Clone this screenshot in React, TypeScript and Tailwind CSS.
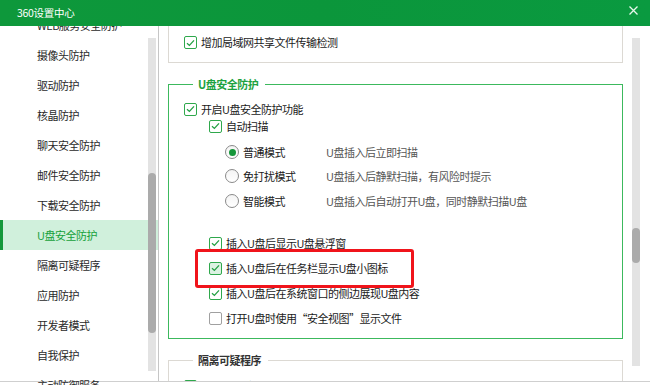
import React from "react";

const FONT = { fontFamily: '"Noto Sans CJK SC", "Noto Sans", sans-serif' };

function Check({ checked = true, hl = false }: { checked?: boolean; hl?: boolean }) {
  return (
    <div
      className={
        "w-[13px] h-[13px] shrink-0 rounded-[2px] border flex items-center justify-center " +
        (checked
          ? hl
            ? "border-[#2fa84c] bg-[#dcf2e2]"
            : "border-[#2fa84c] bg-white"
          : "border-[#a0a0a0] bg-white")
      }
    >
      {checked && (
        <svg width="9" height="8" viewBox="0 0 9 8">
          <path d="M1 4.2 L3.4 6.4 L8 1.4" fill="none" stroke="#23a043" strokeWidth="1.3" />
        </svg>
      )}
    </div>
  );
}

function Radio({ on = false }: { on?: boolean }) {
  return (
    <div className="w-[14px] h-[14px] shrink-0 rounded-full border border-[#8a8a8a] bg-gradient-to-b from-[#f4f4f4] to-white flex items-center justify-center">
      {on && <div className="w-[7px] h-[7px] rounded-full bg-[#16963a]" />}
    </div>
  );
}

const sideItems = [
  "WEB服务安全防护",
  "摄像头防护",
  "驱动防护",
  "核晶防护",
  "聊天安全防护",
  "邮件安全防护",
  "下载安全防护",
  "U盘安全防护",
  "隔离可疑程序",
  "应用防护",
  "开发者模式",
  "自我保护",
  "主动防御服务",
];

export default function App() {
  return (
    <div
      className="w-[650px] h-[385px] flex flex-col overflow-hidden bg-white text-[11px] text-[#1a1a1a] tracking-[-0.5px]"
      style={FONT}
    >
      {/* title bar */}
      <div className="relative z-10 h-[26px] shrink-0 flex items-center justify-between pl-[17px] pr-[12px] bg-gradient-to-r from-[#0e983b] via-[#0b963b] to-[#0a9a40]">
        <span className="text-white text-[10.5px] tracking-[-0.3px]">360设置中心</span>
        <svg width="9" height="9" viewBox="0 0 9 9" className="mt-[-5px]">
          <path d="M0.5 0.5 L8.5 8.5 M8.5 0.5 L0.5 8.5" stroke="#e8f7ec" strokeWidth="1.3" />
        </svg>
      </div>

      {/* body */}
      <div className="h-[356px] shrink-0 flex border-b border-[#cfcfcf]">
        {/* sidebar */}
        <div className="w-[159px] shrink-0 relative border-r border-[#c6c6c6]">
          <div className="-mt-[16px] flex flex-col">
            {sideItems.map((t) => {
              const sel = t === "U盘安全防护";
              return (
                <div
                  key={t}
                  className={
                    "h-[30px] shrink-0 flex items-center " +
                    (sel
                      ? "bg-[#d0f0dc] text-[#16a13a] border-l-[3px] border-[#13983a] pl-[34px]"
                      : "text-[#2a2a2a] pl-[37px]")
                  }
                >
                  {t}
                </div>
              );
            })}
          </div>
          <div className="absolute right-[2px] top-[12px] bottom-[10px] w-[8px] bg-[#e3e3e3]">
            <div className="mt-[135px] h-[160px] rounded-full bg-[#ababab]" />
          </div>
        </div>

        {/* right content */}
        <div className="flex-1 flex overflow-hidden">
          <div className="flex-1 px-[9px] flex flex-col">
            {/* group 1 (cut) */}
            <div className="h-[37px] shrink-0 border border-t-0 border-[#dcd9d3] pl-[15px] pt-[10px]">
              <div className="flex items-center gap-[4px] h-[13px]">
                <Check />
                <span>增加局域网共享文件传输检测</span>
              </div>
            </div>

            {/* group 2 */}
            <fieldset className="mt-[14px] shrink-0 border border-[#3cb95d] pl-[15px] pb-[12px]">
              <legend className="ml-[9px] px-[5px] pr-[7px] h-[14px] leading-[14px] font-bold text-[#1da23f]">
                U盘安全防护
              </legend>
              <div className="pt-[10px] flex flex-col">
                <div className="h-[16px] flex items-center gap-[4px]">
                  <Check />
                  <span>开启U盘安全防护功能</span>
                </div>
                <div className="h-[16px] mt-[1px] pl-[25px] flex items-center gap-[4px]">
                  <Check />
                  <span>自动扫描</span>
                </div>
                {[
                  ["普通模式", "U盘插入后立即扫描", true, 10],
                  ["免打扰模式", "U盘插入后静默扫描，有风险时提示", false, 8],
                  ["智能模式", "U盘插入后自动打开U盘，同时静默扫描U盘", false, 9],
                ].map(([a, b, on, mt]) => (
                  <div
                    key={a as string}
                    className="h-[16px] pl-[41px] flex items-center"
                    style={{ marginTop: mt as number }}
                  >
                    <Radio on={on as boolean} />
                    <span className="ml-[4px] w-[83px]">{a as string}</span>
                    <span className="text-[#555]">{b as string}</span>
                  </div>
                ))}
                <div className="h-[16px] mt-[26px] pl-[25px] flex items-center gap-[4px]">
                  <Check />
                  <span>插入U盘后显示U盘悬浮窗</span>
                </div>
                <div className="h-[16px] mt-[9px] pl-[25px] flex items-center gap-[4px] relative">
                  <Check hl />
                  <span>插入U盘后在任务栏显示U盘小图标</span>
                  <div className="absolute left-[11px] top-[-11px] w-[219px] h-[39px] border-[3px] border-[#f0141b] rounded-[3px] pointer-events-none" />
                </div>
                <div className="h-[16px] mt-[9px] pl-[25px] flex items-center gap-[4px]">
                  <Check />
                  <span>插入U盘后在系统窗口的侧边展现U盘内容</span>
                </div>
                <div className="h-[16px] mt-[9px] pl-[25px] flex items-center gap-[4px]">
                  <Check checked={false} />
                  <span>打开U盘时使用“安全视图”显示文件</span>
                </div>
              </div>
            </fieldset>

            {/* group 3 (cut) */}
            <fieldset className="mt-[14px] shrink-0 border border-[#dcd9d3] pl-[15px] pb-[12px]">
              <legend className="ml-[9px] px-[5px] pr-[7px] h-[14px] leading-[14px] font-semibold text-[#333]">
                隔离可疑程序
              </legend>
              <div className="pt-[11px] flex items-center gap-[4px] h-[27px]">
                <Check />
                <span>下载到风险或未知文件后，提示在沙箱中隔离运行</span>
              </div>
            </fieldset>
          </div>
          <div className="w-[8px] shrink-0 mr-[10px] mt-[12px] mb-[15px] bg-[#e3e3e3]">
            <div className="mt-[190px] h-[35px] rounded-full bg-[#ababab]" />
          </div>
        </div>
      </div>
      <div className="h-[2px] bg-white" />
    </div>
  );
}
